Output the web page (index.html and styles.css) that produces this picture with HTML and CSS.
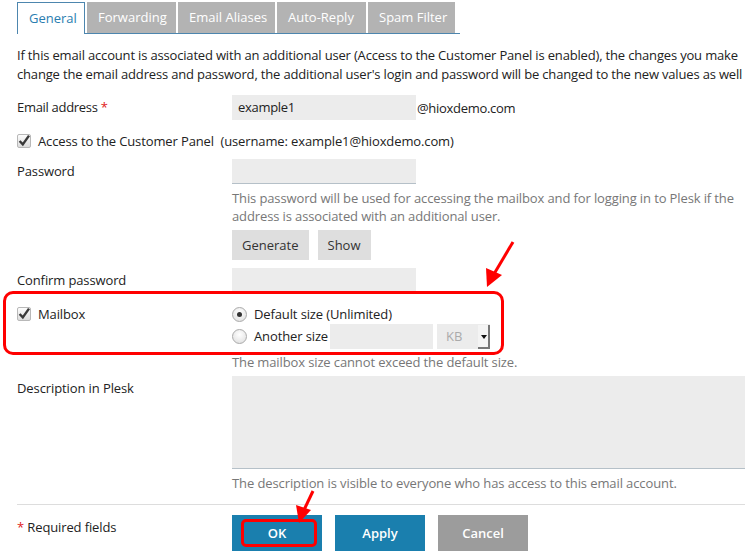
FILE: index.html
```html
<!DOCTYPE html>
<html lang="en">
<head>
<meta charset="UTF-8" />
<title>Mail account settings</title>
<link rel="stylesheet" href="styles.css">
</head>
<body>
<div class="page">
  <!-- Tabs -->
  <ul class="tabs">
    <li class="tab active">General</li>
    <li class="tab">Forwarding</li>
    <li class="tab">Email Aliases</li>
    <li class="tab">Auto-Reply</li>
    <li class="tab">Spam Filter</li>
  </ul>

  <p class="intro">If this email account is associated with an additional user (Access to the Customer Panel is enabled), the changes you make<br>change the email address and password, the additional user's login and password will be changed to the new values as well</p>

  <div class="row row-email">
    <label class="label">Email address <span class="req">*</span></label>
    <div class="field inline">
      <span class="input">example1</span><span class="domain">@hioxdemo.com</span>
    </div>
  </div>

  <div class="row-check">
    <span class="checkbox"><svg viewBox="0 0 14 14" width="14" height="14"><path d="M2.6 7 L5.8 10.4 L12 1.6" fill="none" stroke="#3a3a3a" stroke-width="2.4"/></svg></span>
    <span>Access to the Customer Panel&nbsp; (username: example1@hioxdemo.com)</span>
  </div>

  <div class="row row-pass">
    <label class="label">Password</label>
    <div class="field">
      <span class="input"></span>
      <p class="hint">This password will be used for accessing the mailbox and for logging in to Plesk if the<br>address is associated with an additional user.</p>
      <div class="btns">
        <button class="btn">Generate</button>
        <button class="btn">Show</button>
      </div>
    </div>
  </div>

  <div class="row row-confirm">
    <label class="label">Confirm password</label>
    <div class="field"><span class="input"></span></div>
  </div>

  <div class="row row-mailbox">
    <label class="label check-label">
      <span class="checkbox"><svg viewBox="0 0 14 14" width="14" height="14"><path d="M2.6 7 L5.8 10.4 L12 1.6" fill="none" stroke="#3a3a3a" stroke-width="2.4"/></svg></span>
      Mailbox
    </label>
    <div class="field">
      <div class="radio-line"><span class="radio on"></span>Default size (Unlimited)</div>
      <div class="radio-line"><span class="radio"></span>Another size<span class="input small"></span><span class="select">KB<span class="caret"></span></span></div>
      <p class="hint hint-one">The mailbox size cannot exceed the default size.</p>
    </div>
  </div>

  <div class="row row-desc">
    <label class="label">Description in Plesk</label>
    <div class="field">
      <span class="textarea"></span>
      <p class="hint hint-one">The description is visible to everyone who has access to this email account.</p>
    </div>
  </div>

  <hr class="sep">

  <div class="row row-actions">
    <span class="label"><span class="req">*</span> Required fields</span>
    <div class="field actions">
      <button class="action primary">OK</button>
      <button class="action primary">Apply</button>
      <button class="action cancel">Cancel</button>
    </div>
  </div>

  <!-- Annotations drawn on top of the screenshot -->
  <div class="mark mark-mailbox"></div>
  <div class="mark mark-ok"></div>
  <svg class="arrows" width="745" height="551" viewBox="0 0 745 551">
    <line x1="513" y1="242" x2="494" y2="274" stroke="#f00" stroke-width="3"/>
    <polygon points="487,287 486,268 502,275" fill="#f00"/>
    <line x1="313" y1="491" x2="304" y2="510" stroke="#f00" stroke-width="3"/>
    <polygon points="299,523 296,505 311,510" fill="#f00"/>
  </svg>
</div>
</body>
</html>
```

FILE: styles.css
```css
* {
  box-sizing: border-box;
  margin: 0;
  padding: 0;
}
html, body {
  width: 745px;
  height: 551px;
  overflow: hidden;
  background: #fff;
  font-family: "Open Sans", "DejaVu Sans", sans-serif;
  font-size: 13px;
  color: #222;
}
.page {
  position: relative;
  height: 551px;
  padding: 2px 0 0 17px;
  white-space: nowrap;
  letter-spacing: -0.12px;
}

/* --- Tabs --- */
.tabs {
  display: flex;
  gap: 2px;
  list-style: none;
  width: 443px;
  border-bottom: 1px solid #4d86ae;
  letter-spacing: 0;
}
.tab {
  height: 31px;
  line-height: 31px;
  padding: 0 11px;
  background: #b3b3b3;
  color: #fff;
}
.tab:nth-child(2) { width: 89px; }
.tab:nth-child(3) { width: 97px; }
.tab:nth-child(4) { width: 89px; }
.tab:nth-child(5) { width: 87px; }
.tab.active {
  width: 68px;
  background: #fff;
  color: #2a7db0;
  border: 1px solid #4d86ae;
  border-bottom: none;
  height: 32px;
  margin-bottom: -1px;
  line-height: 31px;
}

/* --- Form --- */
.intro {
  margin-top: 12px;
  line-height: 19px;
  letter-spacing: -0.17px;
}
.row {
  display: grid;
  grid-template-columns: 215px 1fr;
}
.label { line-height: 25px; }
.req { color: #e02020; }
.field.inline { display: flex; align-items: center; }
.input {
  display: block;
  width: 184px;
  height: 25px;
  line-height: 25px;
  padding-left: 6px;
  background: #ececec;
  border-bottom: 1px solid #b5c0c8;
}
.row-email { margin-top: 11px; letter-spacing: -0.3px; }
.row-email .input { border-bottom: none; }
.domain { padding-left: 1px; }

.row-check {
  display: flex;
  align-items: center;
  gap: 7px;
  height: 20px;
  margin-top: 11px;
}
.checkbox {
  display: inline-flex;
  align-items: center;
  justify-content: center;
  width: 14px;
  height: 14px;
  border: 1px solid #b8b8b8;
  border-radius: 2px;
  background: linear-gradient(#fdfdfd, #dcdcdc);
  overflow: visible;
}
.checkbox svg { overflow: visible; }

.row-pass { margin-top: 8px; }
.hint {
  color: #777;
  line-height: 18px;
  margin-top: 5px;
}
.btns { display: flex; gap: 9px; margin-top: 5px; }
.btn {
  font: inherit;
  color: #333;
  height: 30px;
  padding: 0 10px;
  border: none;
  background: #dedede;
}

.row-confirm { margin-top: 8px; }
.row-confirm .input { border-bottom-color: #e4e4e4; }

.row-mailbox { margin-top: 10px; padding-top: 1px; }
.check-label {
  display: flex;
  align-items: center;
  gap: 7px;
  height: 20px;
  line-height: 20px;
}
.radio-line {
  display: flex;
  align-items: center;
  height: 20px;
}
.radio-line + .radio-line { height: 24px; }
.radio {
  width: 15px;
  height: 15px;
  margin-right: 7px;
  border: 1px solid #aaa;
  border-radius: 50%;
  background: radial-gradient(circle at 50% 35%, #fff, #dcdcdc);
  position: relative;
}
.radio.on::after {
  content: "";
  position: absolute;
  left: 4px;
  top: 4px;
  width: 5px;
  height: 5px;
  border-radius: 50%;
  background: #333;
}
.input.small {
  width: 103px;
  margin-left: 2px;
  border-bottom: none;
}
.select {
  display: flex;
  align-items: center;
  width: 53px;
  height: 25px;
  margin-left: 4px;
  padding-left: 9px;
  background: #ececec;
  color: #aaa;
  position: relative;
}
.caret {
  position: absolute;
  right: 0;
  top: 1px;
  width: 12px;
  height: 24px;
  background: #f4f4f4;
  border-right: 2px solid #777;
  border-bottom: 2px solid #777;
}
.caret::after {
  content: "";
  position: absolute;
  left: 3px;
  top: 10px;
  border: 3px solid transparent;
  border-top: 4px solid #111;
}
.hint-one { margin-top: 5px; }

.row-desc { margin-top: 5px; letter-spacing: -0.1px; }
.textarea {
  display: block;
  width: 513px;
  height: 93px;
  background: #ececec;
  border-bottom: 1px solid #b5c0c8;
}

.sep {
  border: none;
  border-top: 1px solid #ddd;
  margin-top: 12px;
}

.row-actions { margin-top: 10px; }
.row-actions .label { line-height: 24px; }
.actions { display: flex; gap: 13px; }
.action {
  font: inherit;
  font-weight: 600;
  color: #fff;
  width: 90px;
  height: 36px;
  border: none;
}
.primary { background: #1a7fae; }
.cancel { background: #9c9c9c; }

/* --- Annotations --- */
.mark {
  position: absolute;
  border: 3px solid #f00;
  border-radius: 10px;
}
.mark-mailbox {
  left: 3px;
  top: 291px;
  width: 501px;
  height: 64px;
}
.mark-ok {
  left: 241px;
  top: 519px;
  width: 76px;
  height: 28px;
  border-radius: 5px;
}
.arrows {
  position: absolute;
  left: 0;
  top: 0;
  pointer-events: none;
}
```
